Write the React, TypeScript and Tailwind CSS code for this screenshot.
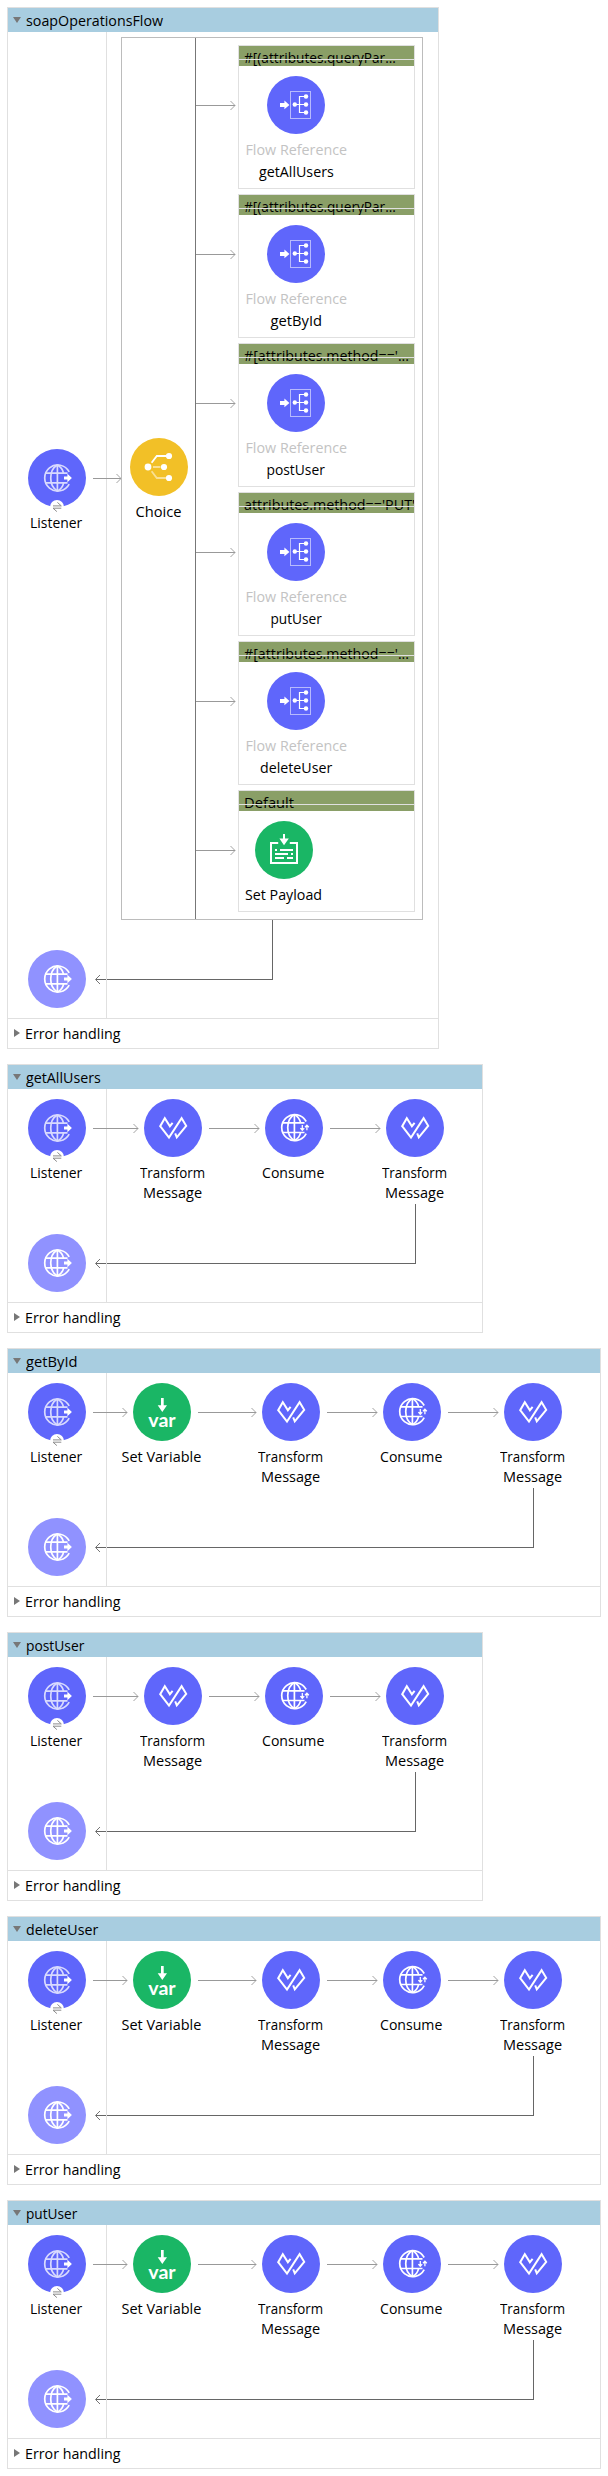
import { useLayoutEffect, useRef, useState } from "react";
import type { ReactNode } from "react";
import { clsx } from "clsx";

/* Text squeezed horizontally to a given width, as narrow UI type. */
function FitText({ text, width, align = "center" }: { text: string; width: number; align?: "left" | "center" }) {
  const ref = useRef<HTMLSpanElement>(null);
  const [scale, setScale] = useState(1);
  useLayoutEffect(() => {
    if (ref.current) setScale(width / ref.current.offsetWidth);
  }, [text, width]);
  return (
    <span className={clsx("inline-block", align === "left" ? "origin-left" : "origin-center")} style={{ transform: `scaleX(${scale})` }}>
      <span ref={ref} className="block whitespace-nowrap leading-5">
        {text}
      </span>
    </span>
  );
}

const LABEL_WIDTH: Record<string, number> = {
  Listener: 52,
  Choice: 46,
  Consume: 62,
  Transform: 65,
  Message: 59,
  "Set Variable": 80,
  "Set Payload": 77,
  "Flow Reference": 102,
  "Error handling": 95,
  soapOperationsFlow: 137,
  getAllUsers: 75,
  getById: 52,
  postUser: 58,
  putUser: 51,
  deleteUser: 72,
  Default: 50,
};

type Kind = "listener" | "return" | "transform" | "consume" | "variable" | "payload" | "flowref" | "choice";

const FILL: Record<Kind, string> = {
  listener: "bg-[#5f66fb]",
  return: "bg-[#9092ff]",
  transform: "bg-[#5f66fb]",
  consume: "bg-[#5f66fb]",
  variable: "bg-[#1ab665]",
  payload: "bg-[#1ab665]",
  flowref: "bg-[#5f66fb]",
  choice: "bg-[#f2c027]",
};

function Globe({ cy }: { cy: number }) {
  return (
    <g transform={`translate(0 ${cy - 29})`} fill="none" stroke="#fff" strokeWidth="1.7">
      <path d="M41.2 22.9A13 13 0 1 0 41.2 35.1" />
      <path d="M29.4 16V42" />
      <path d="M29.4 16C20.5 21 20.5 37 29.4 42" />
      <path d="M29.4 16C33.2 18 35 21.3 35.6 24.4M35.6 33.8C35 37 33.2 40 29.4 42" />
      <path d="M17.4 24.2H39.5M17.4 33.9H39.5" />
    </g>
  );
}

function Glyph({ kind }: { kind: Kind }) {
  switch (kind) {
    case "listener":
    case "return":
      return (
        <>
          <g opacity={kind === "listener" ? 0.76 : 1}>
            <Globe cy={29} />
          </g>
          <path d="M36 27.6H39.4V24.8L43.9 29L39.4 33.2V30.4H36Z" fill="#fff" />
          {kind === "listener" && (
            <>
              <circle cx="29" cy="58" r="7" fill="#fff" />
              <path d="M25 56.9H33.3L29.4 53.4M33.3 59.2H25L28.9 62.6" fill="none" stroke="#8c8c8c" />
            </>
          )}
        </>
      );
    case "consume":
      return (
        <>
          <Globe cy={28.6} />
          <path d="M37.3 26V31M35.4 29.1L37.3 31.2L39.2 29.1M41.9 31.2V26.3M40 28.3L41.9 26.2L43.8 28.3" fill="none" stroke="#fff" strokeWidth="1.3" />
        </>
      );
    case "transform":
      return (
        <path
          d="M28.6 23.8L25.9 27.2L20.8 19.2L16.2 27.2L25 38.6L37.6 19.2L42.2 26.8L32.8 38.4L31.2 34.4"
          fill="none"
          stroke="#fff"
          strokeWidth="2"
        />
      );
    case "variable":
      return (
        <>
          <path d="M28 15H30.7V22.2H34L29.3 29L24.7 22.2H28Z" fill="#fff" />
          <text x="15.3" y="43.6" textLength="27.4" lengthAdjust="spacingAndGlyphs" fill="#fff" className="font-['Lato'] text-[18px] font-bold">
            var
          </text>
        </>
      );
    case "payload":
      return (
        <>
          <path d="M23.2 22H16V42H42V22H34.8" fill="none" stroke="#fff" strokeWidth="2" />
          <path d="M28 13H30V17.4H33.8L29 24.2L24.4 17.4H28Z" fill="#fff" />
          <path d="M20 29H22M25 29H38M20 33H33M36 33H38M20 37H29M32 37H38" stroke="#fff" strokeWidth="1.8" />
        </>
      );
    case "flowref":
      return (
        <>
          <rect x="23.5" y="15.5" width="20" height="27" fill="none" stroke="#fff" opacity="0.55" />
          <path d="M13 27H17.4V24.5L22.4 29L17.4 33.3V31H13Z" fill="#fff" />
          <path d="M28 28.5H39M39 20.5H32.5V36.5H39" fill="none" stroke="#fff" strokeWidth="1.2" />
          <g fill="#fff">
            <circle cx="27.8" cy="28.5" r="2.2" />
            <circle cx="39" cy="20.5" r="2.2" />
            <circle cx="39" cy="28.5" r="2.2" />
            <circle cx="39" cy="36.5" r="2.2" />
          </g>
        </>
      );
    case "choice":
      return (
        <>
          <path d="M21.6 24.8L26.8 18H36" fill="none" stroke="#fff" strokeWidth="1.8" />
          <path d="M23 29H30.5M21.6 33.2L26.8 40H36" fill="none" stroke="#fff" strokeWidth="1.8" opacity="0.5" />
          <g fill="#fff">
            <circle cx="18" cy="29" r="3.4" />
            <circle cx="39" cy="18" r="3.1" />
            <circle cx="34" cy="29" r="3.1" />
            <circle cx="39" cy="40" r="3.1" />
          </g>
        </>
      );
  }
}

function Disc({ kind }: { kind: Kind }) {
  return (
    <div className={clsx("size-[58px] shrink-0 rounded-full", FILL[kind])}>
      <svg viewBox="0 0 58 58" className="block size-[58px] overflow-visible">
        <Glyph kind={kind} />
      </svg>
    </div>
  );
}

function Node({ kind, lines }: { kind: Kind; lines: string[] }) {
  return (
    <div className="flex w-[58px] shrink-0 flex-col items-center">
      <Disc kind={kind} />
      <div className="mt-[5px] mr-px flex flex-col items-center">
        {lines.map((line) => (
          <FitText key={line} text={line} width={LABEL_WIDTH[line]} />
        ))}
      </div>
    </div>
  );
}

function Arrow({ width }: { width: number }) {
  return (
    <svg width={width} height="10" viewBox={`0 0 ${width} 10`} className="block shrink-0 overflow-visible" fill="none" stroke="#999">
      <path d={`M0 5.5H${width}`} />
      <path d={`M${width - 4.5} 1L${width} 5.5L${width - 4.5} 10`} strokeWidth="0.9" />
    </svg>
  );
}

function ReturnRow({ width }: { width: number }) {
  return (
    <div className="flex pb-[10px] pl-5">
      <div className="pt-[30px]">
        <Disc kind="return" />
      </div>
      <svg width={width} height="64" viewBox={`0 0 ${width} 64`} className="ml-[9px] block shrink-0" fill="none" stroke="#666">
        <path d={`M${width - 0.5} 0V59.5H0.5`} shapeRendering="crispEdges" />
        <path d="M5 55L0.5 59.5L5 64" strokeWidth="0.9" />
      </svg>
    </div>
  );
}

function Flow({ name, children }: { name: string; children: ReactNode }) {
  return (
    <section className="flex flex-col border border-[#e0e0e0] bg-white">
      <header className="flex h-6 items-center bg-[#a8cde0] pl-[5px]">
        <svg viewBox="0 0 8 6" className="mb-px h-[6px] w-2">
          <path d="M0 0H8L4 6Z" fill="#777" />
        </svg>
        <div className="ml-[5px]">
          <FitText text={name} width={LABEL_WIDTH[name]} align="left" />
        </div>
      </header>
      <div className="relative flex flex-col">
        <div className="absolute inset-y-0 left-[98px] w-px bg-[#e0e0e0]" />
        {children}
      </div>
      <footer className="flex h-[30px] items-center border-t border-[#e0e0e0] pb-px pl-[6px]">
        <svg viewBox="0 0 6 8" className="mb-px h-2 w-[6px]">
          <path d="M0 0L6 4L0 8Z" fill="#777" />
        </svg>
        <div className="ml-[5px]">
          <FitText text="Error handling" width={LABEL_WIDTH["Error handling"]} align="left" />
        </div>
      </footer>
    </section>
  );
}

type Step = { gap: number; kind: Kind; lines: string[] };

const TRANSFORM = ["Transform", "Message"];

const SHORT: Step[] = [
  { gap: 45, kind: "transform", lines: TRANSFORM },
  { gap: 50, kind: "consume", lines: ["Consume"] },
  { gap: 50, kind: "transform", lines: TRANSFORM },
];

const LONG: Step[] = [
  { gap: 34, kind: "variable", lines: ["Set Variable"] },
  { gap: 58, kind: "transform", lines: TRANSFORM },
  { gap: 50, kind: "consume", lines: ["Consume"] },
  { gap: 50, kind: "transform", lines: TRANSFORM },
];

function StepFlow({ name, steps, returnWidth }: { name: string; steps: Step[]; returnWidth: number }) {
  return (
    <Flow name={name}>
      <div className="relative flex pt-[10px] pr-[38px] pb-[2px] pl-5">
        <Node kind="listener" lines={["Listener"]} />
        {steps.map((step, i) => (
          <div key={i} className="flex">
            <div className="mt-6 mr-[6px] ml-[7px]">
              <Arrow width={step.gap} />
            </div>
            <Node kind={step.kind} lines={step.lines} />
          </div>
        ))}
      </div>
      <ReturnRow width={returnWidth} />
    </Flow>
  );
}

type Case = { title: string; width: number; target?: string };

const CASES: Case[] = [
  { title: "#[(attributes.queryPar...", width: 152, target: "getAllUsers" },
  { title: "#[(attributes.queryPar...", width: 152, target: "getById" },
  { title: "#[attributes.method=='...", width: 165, target: "postUser" },
  { title: "attributes.method=='PUT'", width: 171, target: "putUser" },
  { title: "#[attributes.method=='...", width: 165, target: "deleteUser" },
  { title: "Default", width: 50 },
];

function CaseRow({ item }: { item: Case }) {
  return (
    <div className="flex">
      <div className="mt-[55px] mr-[3px]">
        <Arrow width={39} />
      </div>
      <div className="w-[177px] border border-[#e0e0e0]">
        <div className="relative h-5 overflow-hidden bg-[#8a9f67] pl-[5px]">
          <FitText text={item.title} width={item.width} align="left" />
          <div className="absolute inset-x-0 top-[13px] h-px bg-[#e0e0e0]" />
        </div>
        {item.target ? (
          <div className="flex flex-col items-start pt-[10px] pb-2 pl-[28px]">
            <div className="flex w-[58px] flex-col items-center">
              <Disc kind="flowref" />
              <div className="mt-1 h-[22px] text-[#c3c3c3]">
                <FitText text="Flow Reference" width={LABEL_WIDTH["Flow Reference"]} />
              </div>
              <div className="h-5">
                <FitText text={item.target} width={LABEL_WIDTH[item.target]} />
              </div>
            </div>
          </div>
        ) : (
          <div className="pt-[10px] pb-[7px] pl-4">
            <Node kind="payload" lines={["Set Payload"]} />
          </div>
        )}
      </div>
    </div>
  );
}

function ChoiceFlow() {
  return (
    <Flow name="soapOperationsFlow">
      <div className="relative flex items-start pt-[5px] pr-[15px] pl-5">
        <div className="flex pt-[412px]">
          <Node kind="listener" lines={["Listener"]} />
          <div className="mt-6 ml-[7px]">
            <Arrow width={28} />
          </div>
        </div>
        <div className="flex border border-[#bcbcbc]">
          <div className="w-[74px] border-r border-[#777] pt-[400px] pl-2">
            <Node kind="choice" lines={["Choice"]} />
          </div>
          <div className="flex flex-col gap-[5px] py-[7px] pr-[7px]">
            {CASES.map((item, i) => (
              <CaseRow key={i} item={item} />
            ))}
          </div>
        </div>
      </div>
      <ReturnRow width={178} />
    </Flow>
  );
}

export default function App() {
  return (
    <main className="flex w-[608px] flex-col items-start gap-[15px] bg-white p-[7px] font-['Open_Sans',sans-serif] text-[15px] text-black">
      <ChoiceFlow />
      <StepFlow name="getAllUsers" steps={SHORT} returnWidth={321} />
      <StepFlow name="getById" steps={LONG} returnWidth={439} />
      <StepFlow name="postUser" steps={SHORT} returnWidth={321} />
      <StepFlow name="deleteUser" steps={LONG} returnWidth={439} />
      <StepFlow name="putUser" steps={LONG} returnWidth={439} />
    </main>
  );
}
